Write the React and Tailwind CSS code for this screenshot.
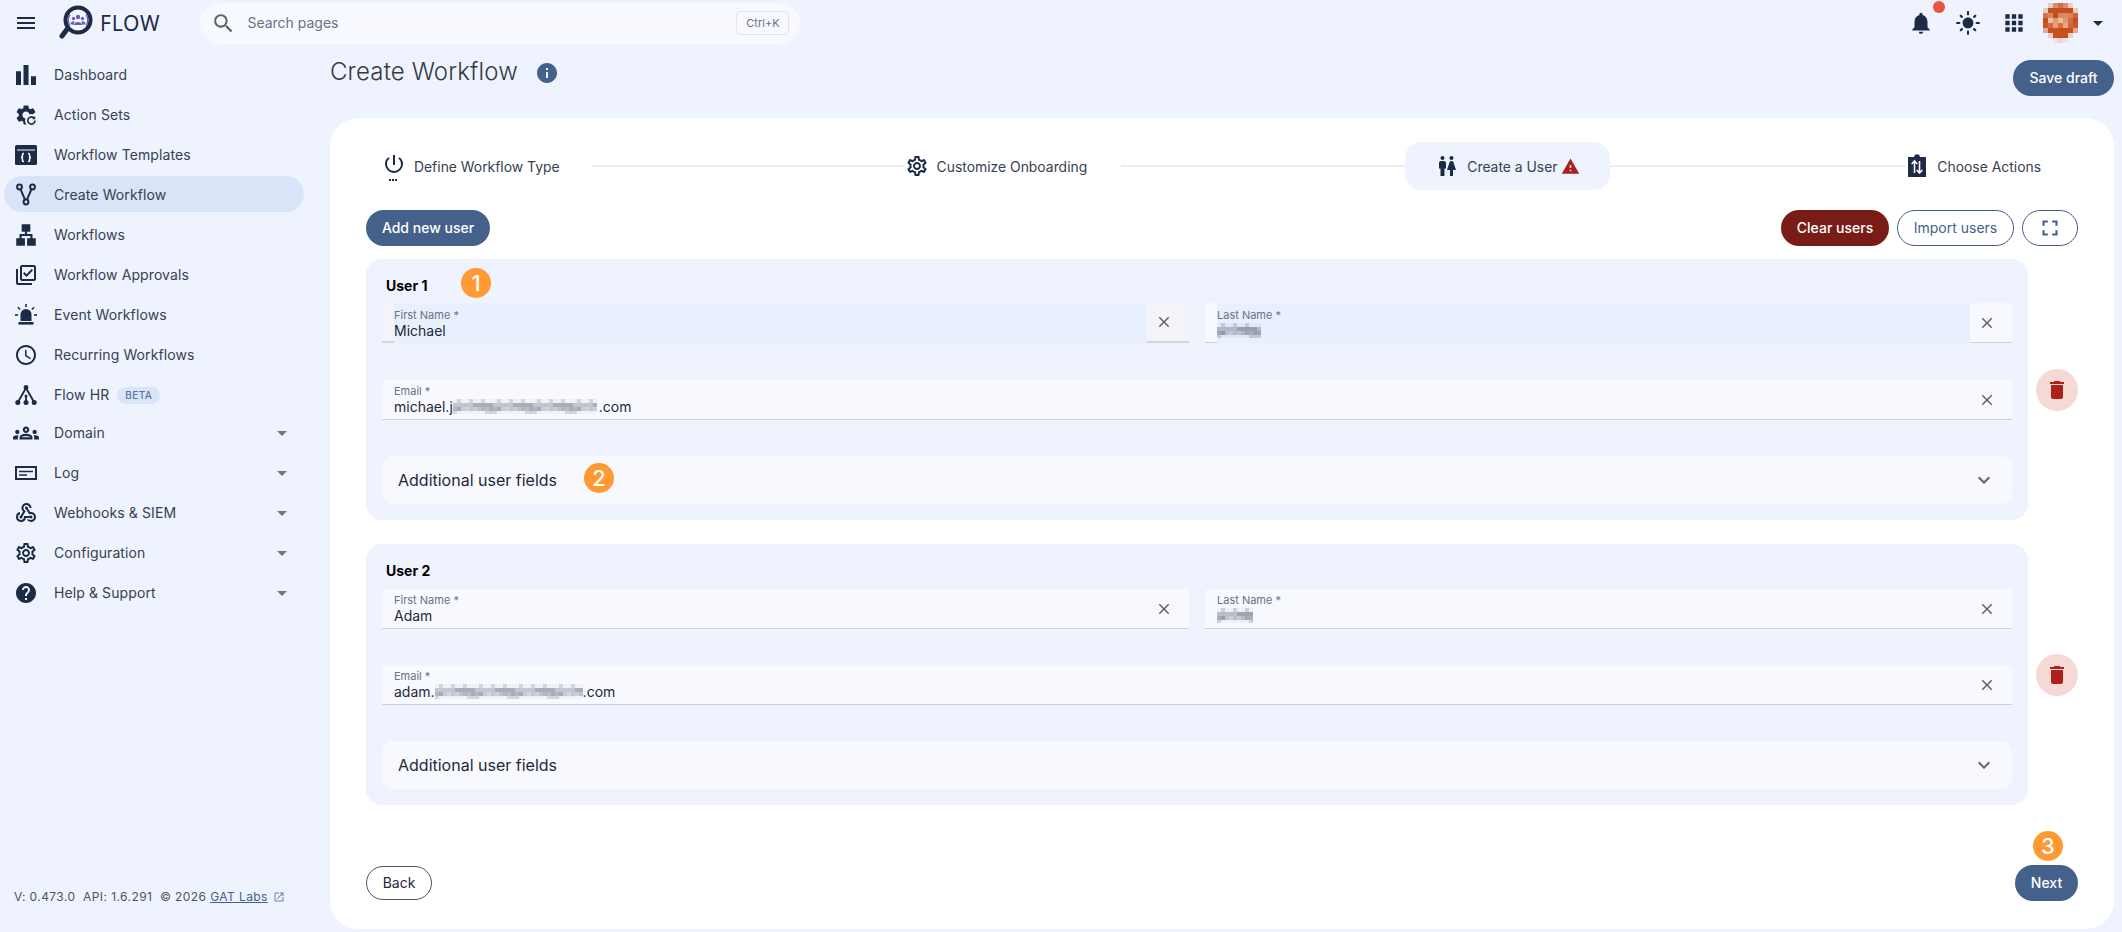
import React from "react";
import {
  MdMenu, MdSearch, MdBarChart, MdLan, MdOutlineLibraryAddCheck, MdOutlineAccessTime,
  MdArrowDropDown, MdOutlineGroups, MdWebhook, MdOutlineSettings, MdHelp, MdNotifications,
  MdLightMode, MdApps, MdInfo, MdPowerSettingsNew, MdWc, MdWarning, MdFullscreen,
  MdClose, MdExpandMore, MdDelete, MdOpenInNew,
} from "react-icons/md";

const NAVY = "#1e2b47";

function Logo() {
  return (
    <svg width="35" height="35" viewBox="0 0 35 35">
      <path d="M10 23 L4 31" stroke={NAVY} strokeWidth="5" strokeLinecap="round" />
      <circle cx="20" cy="15" r="12.5" fill="#f4f6ff" stroke={NAVY} strokeWidth="4" />
      <g fill="#6a5fb5">
        <circle cx="20" cy="12" r="2.2" />
        <circle cx="15.5" cy="13.5" r="1.7" />
        <circle cx="24.5" cy="13.5" r="1.7" />
        <path d="M16 20c0-4 8-4 8 0z" />
        <path d="M12.5 19c0-3 4-3.5 4-2l-1 3z" />
        <path d="M27.5 19c0-3-4-3.5-4-2l1 3z" />
      </g>
      <path d="M12 9.5a10 10 0 0 0 0 11M28 9.5a10 10 0 0 1 0 11" stroke="#6a5fb5" strokeWidth="1.4" fill="none" />
    </svg>
  );
}

function ActionSetsIcon() {
  return (
    <svg width="24" height="24" viewBox="0 0 24 24">
      <path fill={NAVY} d="M19.14 12.94c.04-.3.06-.61.06-.94 0-.32-.02-.64-.07-.94l2.03-1.58a.49.49 0 0 0 .12-.61l-1.92-3.32a.488.488 0 0 0-.59-.22l-2.39.96c-.5-.38-1.03-.7-1.62-.94l-.36-2.54a.484.484 0 0 0-.48-.41h-3.84c-.24 0-.43.17-.47.41l-.36 2.54c-.59.24-1.13.57-1.62.94l-2.39-.96c-.22-.08-.47 0-.59.22L2.74 8.87c-.12.21-.08.47.12.61l2.03 1.58c-.05.3-.09.63-.09.94s.02.64.07.94l-2.03 1.58a.49.49 0 0 0-.12.61l1.92 3.32c.12.22.37.29.59.22l2.39-.96c.5.38 1.03.7 1.62.94l.36 2.54c.05.24.24.41.48.41h3.84c.24 0 .44-.17.47-.41l.36-2.54c.59-.24 1.13-.56 1.62-.94l2.39.96c.22.08.47 0 .59-.22l1.92-3.32c.12-.22.07-.47-.12-.61l-2.01-1.58zM12 15.6c-1.98 0-3.6-1.62-3.6-3.6s1.62-3.6 3.6-3.6 3.6 1.62 3.6 3.6-1.62 3.6-3.6 3.6z" />
      <circle cx="17.5" cy="17.5" r="6.5" fill="#eef3fe" />
      <path d="M21 17.5a3.6 3.6 0 1 1-1.2-2.7" fill="none" stroke={NAVY} strokeWidth="1.6" />
      <path d="M21.2 13v3.2h-3.2z" fill={NAVY} />
    </svg>
  );
}

function TemplatesIcon() {
  return (
    <svg width="24" height="24" viewBox="0 0 24 24">
      <rect x="1" y="2" width="22" height="20" rx="1.5" fill={NAVY} />
      <rect x="3" y="6.5" width="18" height="1" fill="#eef3fe" />
      <path d="M10 10.5c-2 0-1.5 1.500-1.500 2.500s-.5 1.500-1.500 1.500c1 0 1.500.5 1.500 1.500s-.5 2.500 1.500 2.500M14 10.500c2 0 1.500 1.500 1.500 2.500s.5 1.500 1.500 1.500c-1 0-1.500.5-1.500 1.500s.5 2.500-1.500 2.500" fill="none" stroke="#fff" strokeWidth="1.500" />
    </svg>
  );
}

function ForkIcon() {
  return (
    <svg width="24" height="24" viewBox="0 0 24 24" fill="none" stroke={NAVY} strokeWidth="2">
      <circle cx="5.500" cy="4" r="2.400" />
      <circle cx="18.500" cy="4" r="2.400" />
      <circle cx="12" cy="19" r="2.400" />
      <path d="M6.500 6.200 L11 16.700 M17.500 6.200 L13 16.700" />
    </svg>
  );
}

function SirenIcon() {
  return (
    <svg width="24" height="24" viewBox="0 0 24 24" fill={NAVY}>
      <path d="M6.500 18 V11.500 a5.500 5.500 0 0 1 11 0 V18z" />
      <rect x="4.500" y="19" width="15" height="2.600" />
      <rect x="11.200" y="1" width="1.600" height="3" />
      <rect x="1" y="11.200" width="3" height="1.600" />
      <rect x="20" y="11.200" width="3" height="1.600" />
      <path d="M4.500 3.700l2.200 2.200-1.100 1.100-2.200-2.200zM19.500 3.700l-2.200 2.200 1.100 1.100 2.200-2.200z" />
    </svg>
  );
}

function HrIcon() {
  return (
    <svg width="24" height="24" viewBox="0 0 24 24" fill={NAVY}>
      <circle cx="12" cy="4.500" r="2.400" />
      <circle cx="3.800" cy="19.500" r="2.500" />
      <circle cx="12" cy="19.500" r="2.500" />
      <circle cx="20.200" cy="19.500" r="2.500" />
      <circle cx="12" cy="13" r="1.500" />
      <path d="M12 5 L4 19 M12 5 L20 19 M12 13 L12 19" stroke={NAVY} strokeWidth="1.900" fill="none" />
    </svg>
  );
}

function LogIcon() {
  return (
    <svg width="24" height="24" viewBox="0 0 24 24" fill="none" stroke={NAVY} strokeWidth="2">
      <rect x="2" y="6" width="20" height="12" />
      <path d="M5 10.500 H19 M5 14 H13" strokeWidth="1.400" />
    </svg>
  );
}

function ActionsIcon() {
  return (
    <svg width="24" height="24" viewBox="0 0 24 24">
      <path d="M3 4h6l1-2.500h4L15 4h6v20H3z" fill={NAVY} transform="translate(0 -1)" />
      <path d="M9.500 19 V7.500 M6.700 10 L9.500 7 L12.300 10 M14.500 7 V18.500 M11.700 16 L14.500 19 L17.300 16" fill="none" stroke="#fff" strokeWidth="1.600" />
    </svg>
  );
}

function PowerIcon() {
  return (
    <div className="relative w-6 h-6">
      <MdPowerSettingsNew size={24} color={NAVY} className="-mt-[2px]" />
      <div className="absolute left-[7px] bottom-[-3px] flex gap-[1px]">
        <span className="w-[2px] h-[2px] bg-[#1e2b47]"></span>
        <span className="w-[2px] h-[2px] bg-[#1e2b47]"></span>
        <span className="w-[2px] h-[2px] bg-[#1e2b47]"></span>
      </div>
    </div>
  );
}

const avatarPixels = [
  [null, "#e6ccc8", "#d98c70", "#cc7048", "#d98c70", "#e8d0cc", null],
  ["#ecc8b8", "#c64f1e", "#c64f1e", "#c64f1e", "#c64f1e", "#c64f1e", "#ecc8b8"],
  ["#d0764c", "#cf8a60", "#c65020", "#d88a68", "#d98868", "#d88060", "#c8683c"],
  ["#c55020", "#e5c0a8", "#e39a70", "#ecbf8c", "#dd9a70", "#d0703c", "#c65020"],
  ["#c85a28", "#d5683e", "#e8a080", "#d27040", "#e8a888", "#d0683a", "#c85a28"],
  ["#e6a890", "#c65020", "#c64f1e", "#c64f1e", "#c64f1e", "#c65020", "#e6a890"],
  [null, "#ecd0c8", "#c65020", "#c64f1e", "#c65020", "#ecd0c8", null],
  [null, null, "#ece4ea", "#e8d4d4", "#ece4ea", null, null],
];

function Avatar() {
  return (
    <svg width="35" height="40" viewBox="0 0 35 40" shapeRendering="crispEdges">
      {avatarPixels.map((row, y) =>
        row.map((c, x) => c && <rect key={x + "-" + y} x={x * 5} y={y * 5} width="5" height="5" fill={c} />)
      )}
    </svg>
  );
}

// pixelated area over the private part of a name or address
function Blur({ w, h = 15, dark }) {
  const cols = Math.floor(w / 4);
  const cells = [];
  for (let x = 0; x < cols; x++) {
    for (let y = 0; y < Math.ceil(h / 4); y++) {
      const n = (x * 7 + y * 13 + ((x * y) % 5) * 3) % 10;
      const middle = y === 1 || y === 2;
      const op = middle ? 0.3 + n * 0.04 : n > 6 ? 0.3 : 0.06;
      cells.push(<rect key={x + "-" + y} x={x * 4} y={y * 4} width="4" height="4" fill={dark ? "#6a6c7a" : "#7d8090"} opacity={op} />);
    }
  }
  return (
    <svg width={w} height={h} viewBox={`0 0 ${w} ${h}`} shapeRendering="crispEdges">
      {cells}
    </svg>
  );
}

function Badge({ n, className }) {
  return (
    <div className={`absolute w-[30px] h-[30px] rounded-full bg-[#ff9a33] text-white text-[22px] font-medium flex items-center justify-center ${className}`}>
      {n}
    </div>
  );
}

const navItems = [
  { label: "Dashboard", icon: <MdBarChart size={30} color={NAVY} className="-m-[3px]" /> },
  { label: "Action Sets", icon: <ActionSetsIcon /> },
  { label: "Workflow Templates", icon: <TemplatesIcon /> },
  { label: "Create Workflow", icon: <ForkIcon />, active: true },
  { label: "Workflows", icon: <MdLan size={26} color={NAVY} className="-m-[1px]" /> },
  { label: "Workflow Approvals", icon: <MdOutlineLibraryAddCheck size={24} color={NAVY} /> },
  { label: "Event Workflows", icon: <SirenIcon /> },
  { label: "Recurring Workflows", icon: <MdOutlineAccessTime size={24} color={NAVY} /> },
  { label: "Flow HR", icon: <HrIcon />, beta: true },
  { label: "Domain", icon: <MdOutlineGroups size={26} color={NAVY} className="-m-[1px]" />, caret: true, pull: true },
  { label: "Log", icon: <LogIcon />, caret: true },
  { label: "Webhooks & SIEM", icon: <MdWebhook size={24} color={NAVY} />, caret: true },
  { label: "Configuration", icon: <MdOutlineSettings size={24} color={NAVY} />, caret: true },
  { label: "Help & Support", icon: <MdHelp size={24} color={NAVY} />, caret: true },
];

function NavItem({ item }) {
  return (
    <div className={`h-10 flex items-center ${item.pull ? "-mt-[2px]" : ""}`}>
      <div className={`ml-1 w-[300px] h-9 rounded-full flex items-center pl-[10px] pr-[10px] ${item.active ? "bg-[#dae4f8] mb-[2px] pt-[2px]" : ""}`}>
        <span className="w-6 h-6 shrink-0 flex items-center justify-center">{item.icon}</span>
        <span className="ml-4 text-sm text-[#374151] tracking-[0.1px]">{item.label}</span>
        {item.beta && (
          <span className="ml-2 px-2 h-[17px] rounded-full bg-[#dbe5f8] text-[#5a76a8] text-[10px] font-medium tracking-[0.4px] flex items-center">
            BETA
          </span>
        )}
        {item.caret && <MdArrowDropDown size={24} color="#757575" className="ml-auto" />}
      </div>
    </div>
  );
}

function Sidebar() {
  return (
    <aside className="w-[330px] shrink-0 flex flex-col pt-[9px] pb-[27px]">
      {navItems.map((item) => (
        <NavItem key={item.label} item={item} />
      ))}
      <div className="mt-auto pl-[14px] flex items-center text-xs text-[#4b5563] tracking-[0.42px] whitespace-pre">
        <span>V: 0.473.0  API: 1.6.291  © 2026 </span>
        <span className="text-[#44618c] underline">GAT Labs</span>
        <MdOpenInNew size={12} color="#6b84a8" className="ml-[5px]" />
      </div>
    </aside>
  );
}

function Header() {
  return (
    <header className="h-[46px] shrink-0 flex items-center">
      <MdMenu size={24} color={NAVY} className="ml-[14px]" />
      <div className="ml-5 -mt-[1px]">
        <Logo />
      </div>
      <span className="ml-[7px] text-[21px] leading-none text-[#1e2b47] font-['Noto_Sans',sans-serif] tracking-[0.8px]">FLOW</span>
      <div className="ml-[40px] w-[600px] h-[41px] rounded-full bg-[#f7f9ff] flex items-center pl-[11px] pr-[11px]">
        <MdSearch size={25} color="#5f6368" />
        <span className="ml-[11px] text-sm text-[#6b7280]">Search pages</span>
        <span className="ml-auto w-[53px] h-6 rounded border border-[#e2e4ea] text-[11px] text-[#6b7280] flex items-center justify-center">
          Ctrl+K
        </span>
      </div>
      <div className="ml-auto flex items-center pr-[12px] relative">
        <div className="relative">
          <MdNotifications size={26} color={NAVY} />
          <span className="absolute -top-[9px] right-[-11px] w-3 h-3 rounded-full bg-[#e8543f]"></span>
        </div>
        <MdLightMode size={26} color={NAVY} className="ml-[21px]" />
        <MdApps size={26} color={NAVY} className="ml-[20px]" />
        <div className="ml-[16px]">
          <Avatar />
        </div>
        <MdArrowDropDown size={24} color={NAVY} className="ml-[8px]" />
      </div>
    </header>
  );
}

function Stepper() {
  const line = "h-[2px] bg-[#eeeeee]";
  return (
    <div className="flex items-center h-12 text-[13.9px] text-[#374151]">
      <div className="flex items-center pl-4 pr-[32px] whitespace-nowrap">
        <PowerIcon />
        <span className="ml-2 mt-[2px]">Define Workflow Type</span>
      </div>
      <div className={`${line} w-[313px]`}></div>
      <div className="flex items-center pr-[34px] whitespace-nowrap">
        <MdOutlineSettings size={24} color={NAVY} />
        <span className="ml-2 mt-[2px]">Customize Onboarding</span>
      </div>
      <div className={`${line} w-[284px]`}></div>
      <div className="flex items-center h-12 px-[30px] rounded-2xl bg-[#eef3fe] whitespace-nowrap">
        <MdWc size={24} color={NAVY} />
        <span className="ml-2 mt-[2px]">Create a User</span>
        <MdWarning size={19} color="#a8201a" className="ml-[3px]" />
      </div>
      <div className={`${line} flex-1`}></div>
      <div className="flex items-center pr-[37px] whitespace-nowrap">
        <ActionsIcon />
        <span className="ml-2 mt-[2px]">Choose Actions</span>
      </div>
    </div>
  );
}

function Field({ label, value, auto, hover, loose }) {
  const side = hover ? "bg-[#f2f4fa] border-b-2 border-[#d4d5da]" : "bg-[#f7f9ff] border-b border-[#d0d1d6]";
  return (
    <div className="flex h-10 rounded-t overflow-hidden">
      <div className={`w-3 shrink-0 ${side}`}></div>
      <div className={`flex-1 min-w-0 ${loose ? "pt-[5px]" : "pt-1"} ${auto ? "bg-[#e8f0fe]" : "bg-[#f7f9ff] border-b border-[#d0d1d6]"}`}>
        <div className="text-[11px] leading-[14px] text-[#6b7280]">{label}</div>
        <div className="text-sm leading-[17px] text-[#1f2937] flex items-center h-[17px]">{value}</div>
      </div>
      <div className={`w-[42px] shrink-0 flex items-center justify-center pr-[8px] ${side}`}>
        <MdClose size={18} color="#5f6368" />
      </div>
    </div>
  );
}

function UserCard({ title, badge1, badge2, first, last, email, autofill }) {
  return (
    <div className="flex items-center gap-2">
      <div className="relative flex-1 h-[261px] rounded-2xl bg-[#eef3fe] px-4 pt-[17px]">
        {badge1 && <Badge n="1" className="left-[95px] top-[9px]" />}
        <div className="pl-1 text-sm leading-5 font-bold text-black">{title}</div>
        <div className={`grid grid-cols-2 gap-4 ${autofill ? "mt-[7px]" : "mt-2"}`}>
          <Field label="First Name *" value={first} auto={autofill} hover={autofill} loose={autofill} />
          <Field label="Last Name *" value={last} auto={autofill} loose={autofill} />
        </div>
        <div className={autofill ? "mt-[37px]" : "mt-9"}>
          <Field label="Email *" value={email} />
        </div>
        <div className="relative mt-9 h-12 rounded-xl bg-[#f7f9ff] px-4 flex items-center">
          <span className="text-base text-[#1f2937]">Additional user fields</span>
          {badge2 && <Badge n="2" className="left-[202px] top-[7px]" />}
          <MdExpandMore size={24} color="#5f6368" className="ml-auto" />
        </div>
      </div>
      <button className="w-[42px] h-[42px] shrink-0 rounded-full bg-[#f5d9d5] flex items-center justify-center">
        <MdDelete size={24} color="#b0201a" />
      </button>
    </div>
  );
}

function Btn({ children, className }) {
  return (
    <button className={`h-9 rounded-full text-sm font-medium flex items-center justify-center ${className}`}>
      {children}
    </button>
  );
}

export default function App() {
  return (
    <div className="h-screen overflow-hidden flex flex-col bg-[#eef3fe] font-['Inter',sans-serif]">
      <Header />
      <div className="flex flex-1 min-h-0">
        <Sidebar />
        <main className="flex-1 min-w-0 pr-2">
          <div className="h-[72px] flex items-start">
            <h1 className="mt-[10px] text-2xl font-light text-[#333a45] tracking-[0.15px]">Create Workflow</h1>
            <MdInfo size={24} color="#44618c" className="ml-[17px] mt-[15px]" />
            <Btn className="ml-auto mt-[14px] w-[101px] bg-[#44618c] text-white">Save draft</Btn>
          </div>
          <div className="h-[811px] rounded-[28px] bg-white pl-9 pr-9 pt-6">
            <Stepper />
            <div className="mt-5 flex items-center gap-2">
              <Btn className="w-[124px] bg-[#44618c] text-white">Add new user</Btn>
              <Btn className="ml-auto w-[108px] bg-[#7a1c16] text-white">Clear users</Btn>
              <Btn className="w-[117px] border border-[#44618c] text-[#44618c] font-normal">Import users</Btn>
              <Btn className="w-14 border border-[#44618c]">
                <MdFullscreen size={26} color="#44618c" />
              </Btn>
            </div>
            <div className="mt-[13px] flex flex-col gap-6">
              <UserCard
                title="User 1"
                badge1
                badge2
                autofill
                first="Michael"
                last={<Blur w={44} dark />}
                email={<>michael.j<Blur w={146} />.com</>}
              />
              <UserCard
                title="User 2"
                first="Adam"
                last={<Blur w={36} dark />}
                email={<>adam.<Blur w={148} />.com</>}
              />
            </div>
            <div className="mt-[60px] flex items-end justify-between">
              <button className="mb-[1px] w-[66px] h-[34px] rounded-full border-[1.5px] border-[#4a5568] text-sm text-[#1f2937] flex items-center justify-center">
                Back
              </button>
              <div className="relative">
                <Badge n="3" className="left-[18px] -top-[34px]" />
                <Btn className="w-[63px] bg-[#44618c] text-white">Next</Btn>
              </div>
            </div>
          </div>
        </main>
      </div>
    </div>
  );
}
